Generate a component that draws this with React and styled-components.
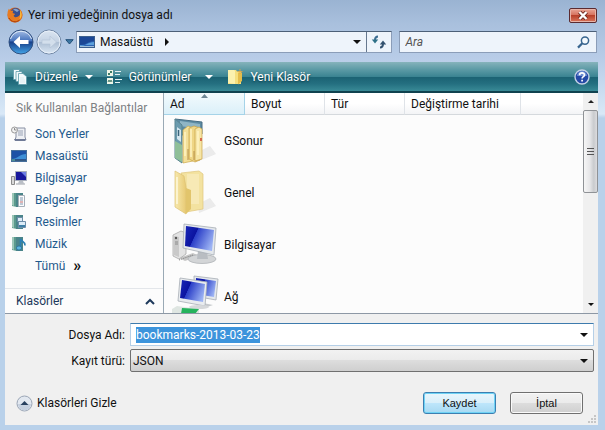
import React, { useEffect, useRef } from 'react';
import styled, { createGlobalStyle } from 'styled-components';

const places = [
    { name: 'Son Yerler', icon: 'recent' },
    { name: 'Masaüstü', icon: 'desktop' },
    { name: 'Bilgisayar', icon: 'computer' },
    { name: 'Belgeler', icon: 'documents' },
    { name: 'Resimler', icon: 'pictures' },
    { name: 'Müzik', icon: 'music' },
];

const App = () => {
    const fileName = useRef(null);

    useEffect(() => {
        fileName.current.focus();
        fileName.current.select();
    }, []);

    return (
        <>
        <GlobalStyle/>
        <Window>
            <TitleBar>
                <FirefoxIcon/>
                <Title>Yer imi yedeğinin dosya adı</Title>
                <CloseButton aria-label="Kapat"><CloseIcon/></CloseButton>
            </TitleBar>

            <NavRow>
                <RoundButton aria-label="Geri"><BackIcon/></RoundButton>
                <RoundButton aria-label="İleri"><ForwardIcon/></RoundButton>
                <RoundButton $small aria-label="Geçmiş"><HistoryArrow/></RoundButton>
                <AddressBar>
                    <Crumb><DesktopIcon/>Masaüstü<Arrow $dir="right"/></Crumb>
                    <PlainButton aria-label="Önceki konumlar"><Arrow/></PlainButton>
                    <RefreshButton aria-label="Yenile"><RefreshIcon/></RefreshButton>
                </AddressBar>
                <SearchBox>
                    <SearchInput type="text" placeholder="Ara" aria-label="Ara"/>
                    <SearchIcon/>
                </SearchBox>
            </NavRow>

            <Toolbar>
                <ToolButton><OrganizeIcon/>Düzenle<Arrow $color="#fff"/></ToolButton>
                <ToolButton $wide><ViewsIcon/>Görünümler<Arrow $color="#fff"/></ToolButton>
                <ToolButton><NewFolderIcon/>Yeni Klasör</ToolButton>
                <HelpButton aria-label="Yardım"><HelpIcon/></HelpButton>
            </Toolbar>

            <Content>
                <Sidebar>
                    <SideTitle>Sık Kullanılan Bağlantılar</SideTitle>
                    {places.map((place) => (
                        <SideLink href="#" key={place.name}>
                            <PlaceIcon kind={place.icon}/>{place.name}
                        </SideLink>
                    ))}
                    <SideLink href="#" $more>Tümü <More>»</More></SideLink>
                    <FoldersButton>Klasörler<ChevronUp/></FoldersButton>
                </Sidebar>

                <ListArea>
                    <FileTable>
                        <colgroup>
                            <Col $w={81}/><Col $w={80}/><Col $w={80}/><Col $w={116}/><col/>
                        </colgroup>
                        <thead>
                            <tr>
                                <HeadCell $sorted>Ad<SortMark/></HeadCell>
                                <HeadCell>Boyut</HeadCell>
                                <HeadCell>Tür</HeadCell>
                                <HeadCell>Değiştirme tarihi</HeadCell>
                                <HeadCell as="td"/>
                            </tr>
                        </thead>
                        <tbody>
                            <FileRow icon={<UserFolderIcon/>} name="GSonur"/>
                            <FileRow icon={<FolderIcon/>} name="Genel"/>
                            <FileRow icon={<ComputerIcon/>} name="Bilgisayar"/>
                            <FileRow icon={<NetworkIcon/>} name="Ağ"/>
                        </tbody>
                    </FileTable>
                </ListArea>

                <ScrollBar>
                    <ScrollButton aria-label="Yukarı"><Arrow $dir="up" $size={3}/></ScrollButton>
                    <Thumb><i/><i/><i/></Thumb>
                    <ScrollButton $last aria-label="Aşağı"><Arrow $size={3}/></ScrollButton>
                </ScrollBar>
            </Content>

            <Panel>
                <Fields>
                    <label htmlFor="name">Dosya Adı:</label>
                    <Combo>
                        <NameInput id="name" ref={fileName} defaultValue="bookmarks-2013-03-23"/>
                        <PlainButton aria-label="Dosya adları"><Arrow/></PlainButton>
                    </Combo>
                    <label htmlFor="type">Kayıt türü:</label>
                    <SelectWrap>
                        <TypeSelect id="type"><option>JSON</option></TypeSelect>
                        <Arrow/>
                    </SelectWrap>
                </Fields>
                <Actions>
                    <HideButton><CollapseIcon/>Klasörleri Gizle</HideButton>
                    <DialogButton $primary>Kaydet</DialogButton>
                    <DialogButton>İptal</DialogButton>
                </Actions>
                <Grip/>
            </Panel>
        </Window>
        </>
    );
};

export default App;

const FileRow = ({ icon, name }) => (
    <tr>
        <FileCell colSpan={5}><FileItem>{icon}{name}</FileItem></FileCell>
    </tr>
);

/* ---------- icons ---------- */

const FirefoxIcon = () => (
    <svg width="16" height="16" viewBox="0 0 16 16">
        <circle cx="8" cy="8" r="7.600" fill="#d9661a"/>
        <circle cx="8.600" cy="6" r="5" fill="#3a4f8e"/>
        <path d="M6 2.500c2-1.500 4-.8 6 1l-2 1.500-1.500-1z" fill="#86a3cd"/>
        <path d="M.6 5L1.800 1.800 3.600 4l2.800-.4L5.600 6l2.600 1-1.600 1.800C7 10.600 10 11 12.400 8.600 13.600 7 13.600 4 12.400 2.400 15.600 4.600 16 9 13.600 12.400 10 16.600 3.600 16 1.200 11.600z" fill="#e87b20"/>
        <path d="M13 3.200c2.400 3 2 7-.6 9.200 1-3 .8-6 .6-9.200z" fill="#f8be3e"/>
        <path d="M2 11c2 4 7 5 10.500 2" fill="none" stroke="#a83c10"/>
    </svg>
);

const CloseIcon = () => (
    <svg width="12" height="9" viewBox="0 0 12 9">
        <path d="M2.500 1l7 7M9.500 1l-7 7" stroke="#6b2a22" strokeWidth="4"/>
        <path d="M2.500 1l7 7M9.500 1l-7 7" stroke="#fff" strokeWidth="2.400"/>
    </svg>
);

const BackIcon = () => (
    <svg width="26" height="26" viewBox="0 0 26 26">
        <defs>
            <linearGradient id="back" x1="0" y1="0" x2="0" y2="1">
                <stop offset="0" stopColor="#a9c0e6"/><stop offset=".45" stopColor="#4673bd"/>
                <stop offset=".5" stopColor="#173f8a"/><stop offset="1" stopColor="#43a5e8"/>
            </linearGradient>
        </defs>
        <circle cx="13" cy="13" r="12" fill="url(#back)" stroke="#31507f"/>
        <path d="M2.500 10a11 11 0 0 1 21 0" fill="none" stroke="#dce8f7" strokeWidth="1"/>
        <path d="M5.500 13l6.500-6v4h8.500v4H12v4z" fill="#fff"/>
    </svg>
);

const ForwardIcon = () => (
    <svg width="26" height="26" viewBox="0 0 26 26">
        <defs>
            <linearGradient id="fwd" x1="0" y1="0" x2="0" y2="1">
                <stop offset="0" stopColor="#dbe5f1"/><stop offset=".48" stopColor="#c5d3e4"/>
                <stop offset=".52" stopColor="#aebfd4"/><stop offset="1" stopColor="#dbe8f5"/>
            </linearGradient>
        </defs>
        <circle cx="13" cy="13" r="12" fill="url(#fwd)" stroke="#7187a5"/>
        <circle cx="13" cy="13" r="11" fill="none" stroke="#e8f0f9"/>
        <path d="M20.500 13L14 7v4H6v4h8v4z" fill="#d3dfec" stroke="#b4c3d6" strokeWidth=".6"/>
    </svg>
);

const HistoryArrow = () => (
    <svg width="9" height="6" viewBox="0 0 9 6">
        <path d="M.8.7h7.400L4.500 5z" fill="#3d78a5" stroke="#234f78" strokeWidth="1"/>
    </svg>
);

const DesktopIcon = () => (
    <svg width="16" height="12" viewBox="0 0 16 12">
        <rect x=".5" y=".5" width="15" height="11" fill="#2b62b4" stroke="#3b5f8e"/>
        <path d="M1 1h14v4C9 5 8 9 1 9z" fill="#1b4796"/>
        <path d="M1 10c6 0 8-4 14-4v3H1z" fill="#5ba0dc"/>
        <rect x="1" y="10" width="14" height="1" fill="#9fc0dc"/>
    </svg>
);

const RefreshIcon = () => (
    <svg width="16" height="14" viewBox="0 0 16 14">
        <path d="M7 1.500C4.800 1.500 4 3 4 5" fill="none" stroke="#3d6d92" strokeWidth="2"/>
        <path d="M.8 4.500h6.400L4 8.500z" fill="#2d7087"/>
        <path d="M9 12.500c2.200 0 3-2 3-4" fill="none" stroke="#33516f" strokeWidth="2"/>
        <path d="M8.800 9.500h6.400L12 5.500z" fill="#33516f"/>
    </svg>
);

const SearchIcon = () => (
    <svg width="13" height="13" viewBox="0 0 13 13">
        <circle cx="8" cy="4.600" r="3.600" fill="#f4f9fd" stroke="#38658f" strokeWidth="1.500"/>
        <path d="M5.300 7.300L1 11.600" stroke="#38658f" strokeWidth="2.200"/>
    </svg>
);

const OrganizeIcon = () => (
    <svg width="15" height="16" viewBox="0 0 15 16">
        <g fill="#f3fafc" stroke="#5c9aa8" strokeWidth=".8">
            <path d="M.5.500h6v10h-6z"/>
            <path d="M3 2.500h6v10H3z"/>
            <path d="M5.500 4.500h4.500l3.500 3v8h-8z"/>
        </g>
        <path d="M7 9h4M7 11h5M7 13h5" stroke="#dcebef"/>
    </svg>
);

const ViewsIcon = () => (
    <svg width="15" height="14" viewBox="0 0 15 14">
        <path d="M0 0h6v6H0zM0 8h6v6H0z" fill="#eef6e9"/>
        <path d="M1 3h2v2H1zM3 1h2v2H3z" fill="#3e7c67"/>
        <path d="M1 12l1-2 1 2 1-2 1 2" fill="none" stroke="#4a7f6d"/>
        <path d="M8 1.500h6M8 4.500h5M8 9.500h7M8 12.500h5" stroke="#e6f3f5"/>
    </svg>
);

const NewFolderIcon = () => (
    <svg width="16" height="16" viewBox="0 0 16 16">
        <path d="M1 1h8l1 1.500h4V15H1z" fill="#f5df7e"/>
        <path d="M1 1h6l1 1v13l-7-1z" fill="#fbf1ae"/>
        <path d="M11 3.500h4V12l-4 3.500z" fill="#e5bd4c"/>
        <path d="M13 0v5M10.500 2.500h5" stroke="#e0a64a" strokeWidth=".8"/>
    </svg>
);

const HelpIcon = () => (
    <svg width="16" height="16" viewBox="0 0 16 16">
        <circle cx="8" cy="8" r="7" fill="#2449a6" stroke="#c3d1e6" strokeWidth="1.400"/>
        <path d="M3 7a5 5 0 0 1 10 0z" fill="#6a8bd0"/>
        <path d="M5.600 6.200C5.600 3.200 10.500 3.300 10.500 6c0 1.600-2.400 1.600-2.400 3.400M8.100 10.700v1.700" fill="none" stroke="#fff" strokeWidth="1.700"/>
    </svg>
);

const Binder = () => (
    <>
        <path d="M1 1h5v14l-5-1z" fill="#5b9a8d"/>
        <path d="M1 1h2v13l-2-1z" fill="#9cc6b8"/>
        <path d="M5 1h7v14H5z" fill="#4a8489"/>
    </>
);

const PlaceIcon = ({ kind }) => (
    <svg width="16" height="16" viewBox="0 0 16 16">
        {kind === 'recent' && <>
            <path d="M5 2h9v9l1 3H4l1-3z" fill="#eef0f4" stroke="#8890a3"/>
            <path d="M7 5h5M7 7h5M7 9h5" stroke="#9aa3b5"/>
            <path d="M3 13h12l-1 2H4z" fill="#6f7a96"/>
            <circle cx="3.500" cy="4" r="3" fill="#f2f2f2" stroke="#9a9a9a"/>
            <path d="M3.500 2v2h2" fill="none" stroke="#777" strokeWidth=".8"/>
        </>}
        {kind === 'desktop' && <>
            <rect x=".5" y="2.500" width="15" height="11" fill="#1d52a6" stroke="#466f9c"/>
            <path d="M1 11c5 0 8-5 14-5v5z" fill="#3e8fd6"/>
            <rect x="1" y="11.500" width="14" height="1.500" fill="#36597f"/>
            <path d="M1 12h3" stroke="#67c7a5"/>
        </>}
        {kind === 'computer' && <>
            <path d="M.5 6.500h3v8h-3z" fill="#d8d8d8" stroke="#8c8c8c"/>
            <path d="M4.500 1.500h11v9h-11z" fill="#18189c" stroke="#a8aeba"/>
            <path d="M10 2h5v5z" fill="#6d7ee4"/>
            <path d="M8 11h4l1 2.500H7z" fill="#b9bec6"/>
            <path d="M5 14h9" stroke="#9ba0a8"/>
        </>}
        {kind === 'documents' && <>
            <Binder/>
            <path d="M7.500 3.500h6v11h-6z" fill="#fbfcfd" stroke="#a5aeb8"/>
            <path d="M9 6h3M9 8h3M9 12h3" stroke="#7f95ad"/>
            <path d="M9 10h3" stroke="#c46a6a"/>
        </>}
        {kind === 'pictures' && <>
            <Binder/>
            <path d="M6.500 3.500h5v4h-5zM7.500 7.500h7v6h-7z" fill="#dcecf7" stroke="#6d8da8"/>
            <path d="M8 11h6v2H8z" fill="#3e7fa6"/>
        </>}
        {kind === 'music' && <>
            <Binder/>
            <path d="M9.500 12V3c1 3 5 2.500 4.500 6.500" fill="none" stroke="#2a7fb4" strokeWidth="1.600"/>
            <ellipse cx="8" cy="12" rx="2.600" ry="2" fill="#5db4dc" stroke="#1f6c9c" strokeWidth=".7"/>
        </>}
    </svg>
);

const ChevronUp = () => (
    <svg width="10" height="7" viewBox="0 0 10 7">
        <path d="M1 6l4-4 4 4" fill="none" stroke="#1e395b" strokeWidth="2"/>
    </svg>
);

const SortMark = () => (
    <SortSvg width="7" height="4" viewBox="0 0 7 4">
        <path d="M0 4l3.500-4L7 4z" fill="#6f8795"/>
    </SortSvg>
);

const UserFolderIcon = () => (
    <svg width="48" height="48" viewBox="0 0 48 48">
        <path d="M28 44l17-7-6-8-12 6z" fill="#d9d9d9" opacity=".5"/>
        <path d="M4 2l27 3v12L10 18z" fill="#5d8ba3" stroke="#466d83"/>
        <path d="M9 4l20 3v5L9 9z" fill="#8fb5c5"/>
        <path d="M4 2l7 6v38l-7-5z" fill="#6b9bae" stroke="#5b8592"/>
        <path d="M4 24l7 4v17l-7-4z" fill="#8fbf98"/>
        <path d="M6 10l4 3v12l-4-3z" fill="#d4e6ee"/>
        <path d="M7.500 13v6" stroke="#3b657b" strokeWidth="1.500"/>
        <path d="M12 13l5-4 5 2v33l-5 1-5 1z" fill="#f3e09a" stroke="#cda94b" strokeWidth=".7"/>
        <path d="M18 11l5-2 6 2v32l-5 2-6-3z" fill="#efd686" stroke="#c9a043" strokeWidth=".7"/>
        <path d="M24 12l4-2 3 2v30l-7 2z" fill="#f6e5a5" stroke="#c9a043" strokeWidth=".7"/>
        <path d="M14 15v24M20 12v28M27 14v24" stroke="#fff3c4" strokeWidth="1.500"/>
        <path d="M17 32v11M23 34v9" stroke="#b8924a"/>
        <path d="M29 21h2v3h-2z" fill="#d56a4a"/>
    </svg>
);

const FolderIcon = () => (
    <svg width="48" height="48" viewBox="0 0 48 48">
        <defs>
            <linearGradient id="fold" x1="0" y1="0" x2="1" y2="0">
                <stop offset="0" stopColor="#f7e9ae"/><stop offset="1" stopColor="#e8ca74"/>
            </linearGradient>
        </defs>
        <path d="M28 44l17-7-6-8-12 6z" fill="#d9d9d9" opacity=".5"/>
        <path d="M10 4l18-2 4 3v35l-17 3z" fill="#f3e2a0" stroke="#dfc67c" strokeWidth=".7"/>
        <path d="M16 5h12v30H16z" fill="#f8edbe" opacity=".7"/>
        <path d="M4 2l9 5 2 11v27L4 38z" fill="url(#fold)" stroke="#dcc274" strokeWidth=".7"/>
        <path d="M6 8v27" stroke="#fffbe2" strokeWidth="2" opacity=".7"/>
        <path d="M15 19l5 2v19l-5 5z" fill="#e2c56c"/>
    </svg>
);

const ScreenGradient = ({ id }) => (
    <linearGradient id={id} x1="0" y1=".2" x2="1" y2=".6">
        <stop offset="0" stopColor="#1724b4"/><stop offset=".35" stopColor="#0b13a0"/>
        <stop offset=".37" stopColor="#2b3fc8"/><stop offset="1" stopColor="#9db4f4"/>
    </linearGradient>
);

const ComputerIcon = () => (
    <svg width="48" height="48" viewBox="0 0 48 48">
        <defs><ScreenGradient id="pc"/></defs>
        <path d="M8 37l14-5 6 3-14 5z" fill="#c7c7c7"/>
        <path d="M2 14l8-4 5 2v21l-7 5-6-3z" fill="#e3e3e3" stroke="#a8a8a8" strokeWidth=".8"/>
        <path d="M3 15l5 1v20l-5-2z" fill="#c9c9c9"/>
        <circle cx="5" cy="17" r="1.200" fill="#555"/>
        <path d="M4 21h3M4 23h3" stroke="#8a8a8a"/>
        <ellipse cx="31" cy="38" rx="14" ry="4.500" fill="#d3d5d7" stroke="#aeb2b6" strokeWidth=".8"/>
        <path d="M27 30l9 2 1 6H26z" fill="#b9bdc2"/>
        <path d="M13 3l32 4-2 27-31-7z" fill="#e4e8ec" stroke="#a7adb5" strokeWidth=".8"/>
        <path d="M15 5l28 4-2 21-27-5z" fill="url(#pc)"/>
        <path d="M8 39l14-5" stroke="#777" strokeDasharray="1 1"/>
    </svg>
);

const NetworkIcon = () => (
    <svg width="48" height="48" viewBox="0 0 48 48">
        <defs><ScreenGradient id="net"/></defs>
        <path d="M23 3l24 3-2 21-22-4z" fill="#e4e8ec" stroke="#a7adb5" strokeWidth=".8"/>
        <path d="M25 5l20 3-2 16-18-3z" fill="url(#net)"/>
        <path d="M32 30l10 2-6 2z" fill="#c6c9cc"/>
        <path d="M9 5l27 4-2 24-27-5z" fill="#e9ecef" stroke="#a7adb5" strokeWidth=".8"/>
        <path d="M11 7l23 4-2 18-23-4z" fill="url(#net)"/>
        <ellipse cx="28" cy="34" rx="10" ry="2" fill="#d6d8da"/>
        <path d="M1 36l5-3 22 3v6H1z" fill="#dfe6e2"/>
        <path d="M11 35l17 1-4 5H10z" fill="#25b35c"/>
    </svg>
);

const CollapseIcon = () => (
    <svg width="17" height="17" viewBox="0 0 17 17">
        <circle cx="8.500" cy="8.500" r="7.500" fill="#e2e8f0" stroke="#9aa5b5"/>
        <path d="M2 9a6.500 6.500 0 0 0 13 0z" fill="#c5d0df"/>
        <path d="M4.500 10l4-4 4 4z" fill="#27405f"/>
    </svg>
);

const Grip = () => (
    <GripSvg width="10" height="10" viewBox="0 0 10 10">
        <path d="M7 1h2v2H7zM4 4h2v2H4zM7 4h2v2H7zM1 7h2v2H1zM4 7h2v2H4zM7 7h2v2H7z" fill="#c6c6c6"/>
    </GripSvg>
);

/* ---------- styles ---------- */

const GlobalStyle = createGlobalStyle`
*{
    box-sizing: border-box;
}
body{
    margin: 0;
    font-family: Roboto, "Noto Sans", sans-serif;
    font-size: 12px;
    line-height: 16px;
    color: #111;
}
button, input, select{
    font: inherit;
    color: inherit;
    margin: 0;
    padding: 0;
    border: none;
    background: none;
}
svg{
    display: block;
    flex: none;
}
`

const Window = styled.div`
display: flex;
flex-direction: column;
height: 100vh;
min-height: 320px;
padding: 0 7px 5px 5px;
background: linear-gradient(#9ab3d2 0, #a9c0dd 24px, #b9cde8 60px, #c9dcf0 90px, #d9e8f7 114px, #b9d1ea 118px);
`

const TitleBar = styled.header`
display: flex;
align-items: center;
gap: 5px;
height: 30px;
padding: 0 1px 0 2px;
`

const Title = styled.h1`
margin: 0;
flex: 1;
font-size: 12px;
font-weight: 400;
`

const CloseButton = styled.button`
display: flex;
align-items: center;
justify-content: center;
width: 28px;
height: 15px;
border: 1px solid #5b2b30;
border-radius: 2px;
background: linear-gradient(#e9a596, #d5705c 48%, #b8402a 50%, #d9765c);
box-shadow: inset 0 0 0 1px #e8b4a8;
`

const NavRow = styled.nav`
display: flex;
align-items: center;
height: 24px;
margin-bottom: 8px;
padding: 0 1px 0 2px;
`

const RoundButton = styled.button`
display: flex;
align-items: center;
justify-content: center;
flex: none;
width: ${props => props.$small ? '13px' : '28px'};
`

const AddressBar = styled.div`
display: flex;
flex: 63;
height: 22px;
margin-right: 7px;
border: 1px solid #8b9db8;
border-top-color: #4d6078;
background: #eef4fb;
`

const Crumb = styled.div`
display: flex;
align-items: center;
flex: 1;
gap: 5px;
padding-left: 2px;

& > span{
    margin-left: 7px;
}
`

const Arrow = styled.span`
display: block;
flex: none;
width: 0;
height: 0;
border: ${props => props.$size || 4}px solid transparent;
${props => props.$dir === 'right' && 'border-left-color: #111; border-right: none;'}
${props => props.$dir === 'up' && 'border-bottom-color: #222; border-top: none;'}
${props => !props.$dir && `border-top-color: ${props.$color || '#111'}; border-bottom: none;`}
`

const PlainButton = styled.button`
display: flex;
align-items: center;
justify-content: center;
width: 18px;
`

const RefreshButton = styled.button`
display: flex;
align-items: center;
justify-content: center;
width: 25px;
border-left: 1px solid #66788f;
`

const SearchBox = styled.div`
display: flex;
align-items: center;
flex: 37;
height: 22px;
padding: 0 6px 0 5px;
border: 1px solid #8b9db8;
border-top-color: #4d6078;
background: #eef4fb;
`

const SearchInput = styled.input`
flex: 1;
min-width: 0;
outline: none;
font-style: italic;

&::placeholder{
    color: #555;
    opacity: 1;
}
`

const Toolbar = styled.div`
display: flex;
align-items: center;
height: 31px;
flex: none;
padding: 0 8px;
border-bottom: 2px solid #10424f;
background: linear-gradient(#86b3bb, #5d9ba6 25%, #3b8492 50%, #1b6273 52%, #246f80 75%, #398a96);
`

const ToolButton = styled.button`
display: flex;
align-items: center;
gap: 7px;
margin-right: 14px;
color: #fff;
text-shadow: 0 1px 2px #0c3d4a;

& > span{
    margin-left: ${props => props.$wide ? '7px' : '0'};
}
`

const HelpButton = styled.button`
margin-left: auto;
`

const Content = styled.main`
display: flex;
flex: 1;
min-height: 0;
border-bottom: 1px solid #8d98a5;
background: #fcfcfc;
`

const Sidebar = styled.aside`
display: flex;
flex-direction: column;
flex: none;
width: 159px;
padding-top: 7px;
border-right: 1px solid #9aa9b5;
`

const SideTitle = styled.h2`
margin: 0 0 7px;
padding-left: 11px;
font-size: 12px;
font-weight: 400;
color: #7d8083;
white-space: nowrap;
`

const SideLink = styled.a`
display: flex;
align-items: center;
gap: 8px;
height: 22px;
padding-left: ${props => props.$more ? '30px' : '6px'};
color: #1f5a8c;
text-decoration: none;
`

const More = styled.span`
color: #111;
font-size: 16px;
font-weight: 700;
`

const FoldersButton = styled.button`
display: flex;
align-items: center;
justify-content: space-between;
height: 25px;
margin-top: auto;
padding: 0 8px 0 11px;
border-top: 1px solid #e3e6ea;
color: #1e395b;
`

const ListArea = styled.div`
flex: 1;
min-width: 0;
overflow: hidden;
`

const FileTable = styled.table`
width: 100%;
table-layout: fixed;
border-collapse: separate;
border-spacing: 0;
`

const Col = styled.col`
width: ${props => props.$w}px;
`

const HeadCell = styled.th`
position: relative;
height: 22px;
padding: 0 0 0 6px;
border-right: 1px solid ${props => props.$sorted ? '#a5d3e8' : '#dfe3e8'};
border-bottom: 1px solid ${props => props.$sorted ? '#a5d3e8' : '#d5d9dd'};
background: ${props => props.$sorted ? 'linear-gradient(#f3fafd, #dbf0f9)' : 'linear-gradient(#fff 50%, #f3f4f6)'};
font-weight: 400;
text-align: left;
white-space: nowrap;

&:last-child{
    border-right: none;
}
`

const SortSvg = styled.svg`
position: absolute;
top: 1px;
left: 50%;
margin-left: -3px;
`

const FileCell = styled.td`
height: 52px;
padding: 0 0 0 7px;
`

const FileItem = styled.div`
display: flex;
align-items: center;
gap: 5px;
`

const ScrollBar = styled.div`
display: flex;
flex-direction: column;
width: 15px;
background: #f0f0f0;
`

const ScrollButton = styled.button`
display: flex;
align-items: center;
justify-content: center;
height: 17px;
margin-top: ${props => props.$last ? 'auto' : '0'};
`

const Thumb = styled.div`
display: flex;
flex-direction: column;
align-items: center;
justify-content: center;
gap: 2px;
height: 83px;
border: 1px solid #8f9296;
border-radius: 2px;
background: linear-gradient(90deg, #f6f6f6, #e6e6e8 45%, #c9cbce 75%, #dcdcde);

i{
    width: 7px;
    height: 1px;
    background: #555;
}
`

const Panel = styled.footer`
position: relative;
flex: none;
padding: 9px 4px 11px 0;
background: #f0f0f0;
`

const Fields = styled.div`
display: grid;
grid-template-columns: 120px 1fr;
align-items: center;
gap: 3px 5px;

label{
    text-align: right;
}
`

const Combo = styled.div`
display: flex;
height: 23px;
border: 1px solid #b5cfe7;
border-top-color: #3d7bad;
background: #fff;
`

const NameInput = styled.input`
flex: 1;
min-width: 0;
padding-left: 5px;
outline: none;

&::selection{
    background: #3c94dc;
    color: #fff;
}
`

const SelectWrap = styled.div`
display: grid;
grid-template-columns: 1fr 13px;
align-items: center;
height: 23px;
border: 1px solid #707070;
border-radius: 2px;
background: linear-gradient(#f2f2f2, #ebebeb 48%, #dddddd 50%, #cfcfcf);
`

const TypeSelect = styled.select`
appearance: none;
height: 21px;
padding-left: 2px;
outline: none;
`

const Actions = styled.div`
display: flex;
align-items: center;
gap: 14px;
margin-top: 20px;
padding: 0 11px;
`

const HideButton = styled.button`
display: flex;
align-items: center;
gap: 4px;
margin-right: auto;
`

const DialogButton = styled.button`
width: 73px;
height: 22px;
border: 1px solid ${props => props.$primary ? '#3c7fb1' : '#707070'};
border-radius: 3px;
background: ${props => props.$primary
    ? 'linear-gradient(#eaf6fc, #d9effa 48%, #bee6fb 50%, #a7d9f2)'
    : 'linear-gradient(#f2f2f2, #ebebeb 48%, #dddddd 50%, #cfcfcf)'};
box-shadow: inset 0 0 0 1px ${props => props.$primary ? '#6fd3f5' : '#fafafa'};
font-family: "Liberation Sans", Arial, sans-serif;
font-size: 11px;
`

const GripSvg = styled.svg`
position: absolute;
right: 1px;
bottom: 1px;
`
